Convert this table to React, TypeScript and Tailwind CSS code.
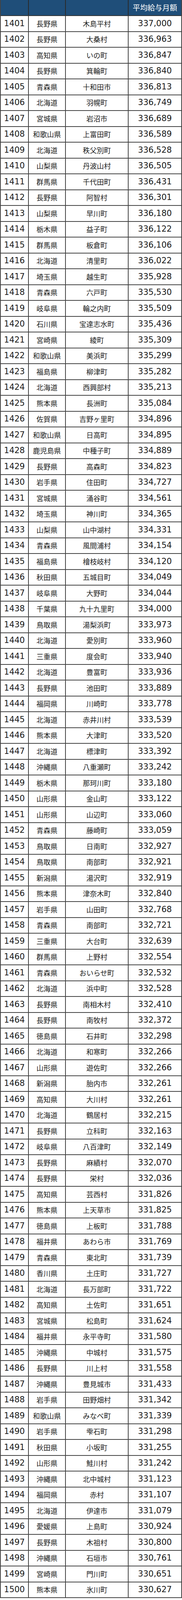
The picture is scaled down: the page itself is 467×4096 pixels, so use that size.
const raw = `1401 長野県 木島平村 337,000
1402 長野県 大桑村 336,963
1403 高知県 いの町 336,847
1404 長野県 箕輪町 336,840
1405 青森県 十和田市 336,813
1406 北海道 羽幌町 336,749
1407 宮城県 岩沼市 336,689
1408 和歌山県 上富田町 336,589
1409 北海道 秩父別町 336,528
1410 山梨県 丹波山村 336,505
1411 群馬県 千代田町 336,431
1412 長野県 阿智村 336,301
1413 山梨県 早川町 336,180
1414 栃木県 益子町 336,122
1415 群馬県 板倉町 336,106
1416 北海道 清里町 336,022
1417 埼玉県 越生町 335,928
1418 青森県 六戸町 335,530
1419 岐阜県 輪之内町 335,509
1420 石川県 宝達志水町 335,436
1421 宮崎県 綾町 335,309
1422 和歌山県 美浜町 335,299
1423 福島県 柳津町 335,282
1424 北海道 西興部村 335,213
1425 熊本県 長洲町 335,084
1426 佐賀県 吉野ヶ里町 334,896
1427 和歌山県 日高町 334,895
1428 鹿児島県 中種子町 334,889
1429 長野県 高森町 334,823
1430 岩手県 住田町 334,727
1431 宮城県 涌谷町 334,561
1432 埼玉県 神川町 334,365
1433 山梨県 山中湖村 334,331
1434 青森県 風間浦村 334,154
1435 福島県 檜枝岐村 334,120
1436 秋田県 五城目町 334,049
1437 岐阜県 大野町 334,044
1438 千葉県 九十九里町 334,000
1439 鳥取県 湯梨浜町 333,973
1440 北海道 愛別町 333,960
1441 三重県 度会町 333,940
1442 北海道 豊富町 333,936
1443 長野県 池田町 333,889
1444 福岡県 川崎町 333,778
1445 北海道 赤井川村 333,539
1446 熊本県 大津町 333,520
1447 北海道 標津町 333,392
1448 沖縄県 八重瀬町 333,242
1449 栃木県 那珂川町 333,180
1450 山形県 金山町 333,122
1451 山形県 山辺町 333,060
1452 青森県 藤崎町 333,059
1453 鳥取県 日南町 332,927
1454 鳥取県 南部町 332,921
1455 新潟県 湯沢町 332,919
1456 熊本県 津奈木町 332,840
1457 岩手県 山田町 332,768
1458 青森県 南部町 332,721
1459 三重県 大台町 332,639
1460 群馬県 上野村 332,554
1461 青森県 おいらせ町 332,532
1462 北海道 浜中町 332,528
1463 長野県 南相木村 332,410
1464 長野県 南牧村 332,372
1465 徳島県 石井町 332,298
1466 北海道 和寒町 332,266
1467 山形県 遊佐町 332,266
1468 新潟県 胎内市 332,261
1469 高知県 大川村 332,261
1470 北海道 鶴居村 332,215
1471 長野県 立科町 332,163
1472 岐阜県 八百津町 332,149
1473 長野県 麻績村 332,070
1474 長野県 栄村 332,036
1475 高知県 芸西村 331,826
1476 熊本県 上天草市 331,825
1477 徳島県 上板町 331,788
1478 福井県 あわら市 331,769
1479 青森県 東北町 331,739
1480 香川県 土庄町 331,727
1481 北海道 長万部町 331,722
1482 高知県 土佐町 331,651
1483 宮城県 松島町 331,624
1484 福井県 永平寺町 331,580
1485 沖縄県 中城村 331,575
1486 長野県 川上村 331,558
1487 沖縄県 豊見城市 331,433
1488 岩手県 田野畑村 331,342
1489 和歌山県 みなべ町 331,339
1490 岩手県 雫石町 331,298
1491 秋田県 小坂町 331,255
1492 山形県 鮭川村 331,242
1493 沖縄県 北中城村 331,123
1494 福岡県 赤村 331,107
1495 北海道 伊達市 331,079
1496 愛媛県 上島町 330,924
1497 長野県 木祖村 330,800
1498 沖縄県 石垣市 330,761
1499 宮崎県 門川町 330,651
1500 熊本県 氷川町 330,627`;

const rows = raw.split('\n').map((line) => {
  const [rank, pref, city, pay] = line.split(' ');
  return { rank, pref, city, pay };
});

const num = "font-['DejaVu_Sans',sans-serif] text-[21px]";
const jp = "font-['Noto_Sans_CJK_JP',sans-serif] text-[18px]";

export default function App() {
  return (
    <div className="w-[467px] bg-white text-[#1a1a1a]">
      <div className="border-l-2 border-r-2 border-[#444]">
        {/* Header */}
        <div className="grid grid-cols-[72px_95px_161px_135px] h-[41px] bg-[#1f4e79] border-b-2 border-[#333]">
          <div className="border-r-2 border-[#2a2a2a]" />
          <div className="border-r-2 border-[#2a2a2a]" />
          <div className="border-r-2 border-[#2a2a2a]" />
          <div className="flex items-center justify-center text-white font-['Noto_Sans_CJK_JP',sans-serif] text-[19px]">
            平均給与月額
          </div>
        </div>

        {rows.map((r) => (
          <div
            key={r.rank}
            className="grid grid-cols-[72px_95px_161px_135px] h-[40.5px] border-b-2 border-[#444]"
          >
            <div className={`flex items-center justify-center border-r-2 border-[#444] ${num}`}>{r.rank}</div>
            <div className={`flex items-center justify-center border-r-2 border-[#444] ${jp}`}>{r.pref}</div>
            <div className={`flex items-center justify-center border-r-2 border-[#444] ${jp}`}>{r.city}</div>
            <div className={`flex items-center justify-center ${num}`}>{r.pay}</div>
          </div>
        ))}
      </div>
    </div>
  );
}
